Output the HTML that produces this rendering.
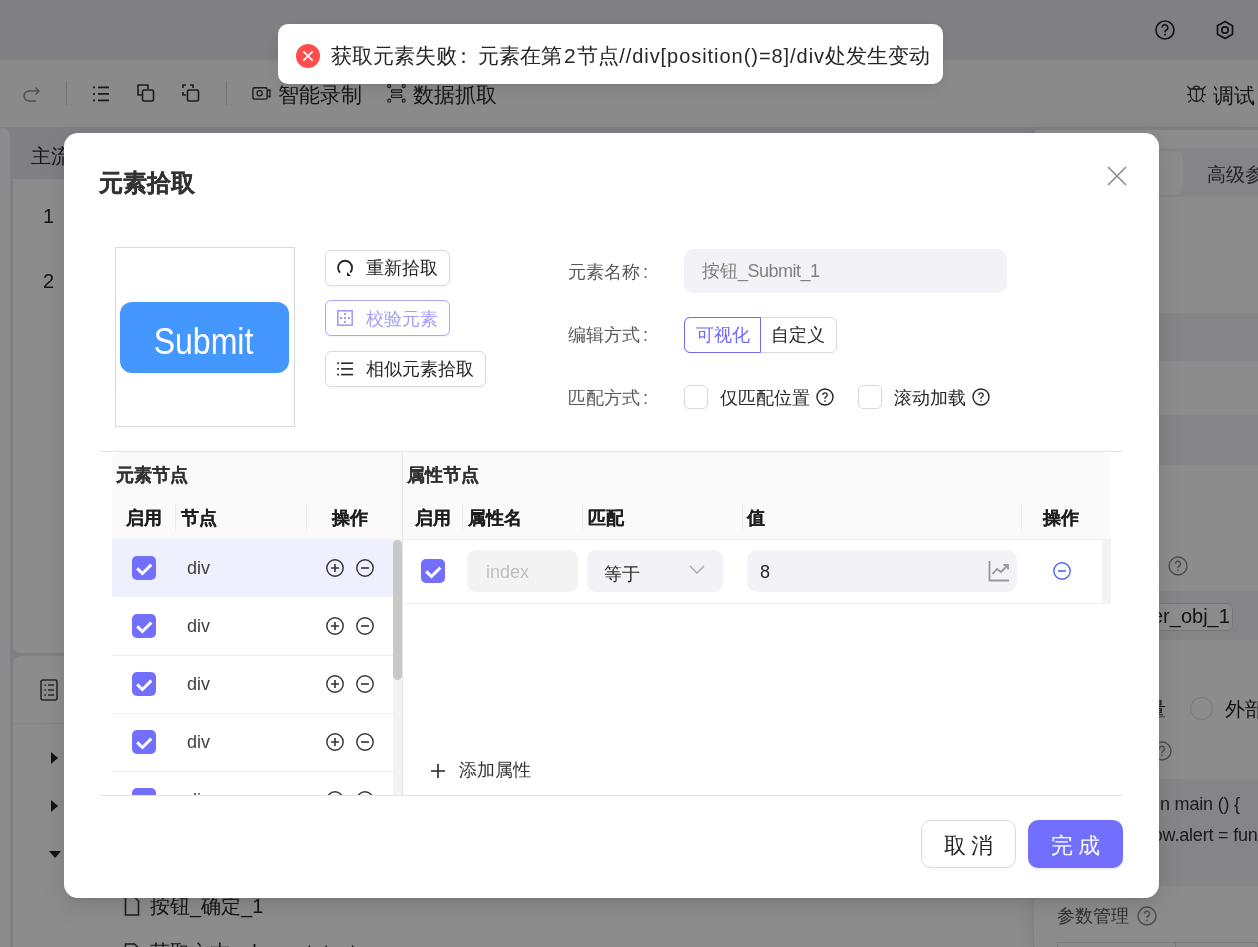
<!DOCTYPE html>
<html><head><meta charset="utf-8">
<style>
*{box-sizing:border-box;margin:0;padding:0}
html,body{width:1258px;height:947px;overflow:hidden;font-family:"Liberation Sans",sans-serif;background:#e9e7f1;position:relative;color:#262626}
.a{position:absolute}
.t{position:absolute;white-space:nowrap;line-height:1}
svg{position:absolute;overflow:visible}
/* background app */
#topbar{left:0;top:0;width:1258px;height:60px;background:#e9e7f1}
#toolbar{left:0;top:60px;width:1258px;height:67px;background:#fbfbfb}
#mask{left:0;top:0;width:1258px;height:947px;background:rgba(0,0,0,0.45)}
.sep{position:absolute;width:1px;height:24px;top:81px;background:#d0d0d0}
.bgtxt{font-size:22px;color:#262626}
/* modal */
#modal{left:64px;top:133px;width:1095px;height:765px;background:#fff;border-radius:14px;box-shadow:0 6px 16px rgba(0,0,0,.08),0 3px 6px -4px rgba(0,0,0,.12),0 9px 28px 8px rgba(0,0,0,.05)}
#toast{left:278px;top:24px;width:665px;height:60px;background:#fff;border-radius:10px;box-shadow:0 6px 16px rgba(0,0,0,.08),0 3px 6px -4px rgba(0,0,0,.12)}
.btn{position:absolute;height:36px;border:1px solid #d9d9d9;border-radius:6px;background:#fff;box-shadow:0 2px 0 rgba(0,0,0,.02);font-size:18px;line-height:34px;color:#262626}
.lbl{position:absolute;font-size:18px;color:#595959;line-height:20px;white-space:nowrap}
.cb{position:absolute;width:24px;height:24px;border:1px solid #d9d9d9;border-radius:5px;background:#fff}
.cbc{position:absolute;width:24px;height:24px;border-radius:5px;background:#736ffe}
.hd{position:absolute;font-size:18px;font-weight:bold;color:#1f1f1f;line-height:20px;white-space:nowrap;-webkit-text-stroke:.15px #1f1f1f}
.vd{position:absolute;width:1px;height:28px;top:503px;background:#ececec}
.hl{position:absolute;height:1px;background:#efefef}
.cell{position:absolute;font-size:18px;color:#404040;line-height:20px;white-space:nowrap}
#wrap{position:absolute;left:0;top:0;width:1258px;height:947px;will-change:transform}
</style></head><body><div id="wrap">
<!-- ===== background app ===== -->
<div id="topbar" class="a"></div>
<svg style="left:1155px;top:20px" width="20" height="20" viewBox="0 0 20 20"><circle cx="10" cy="10" r="9" fill="none" stroke="#222" stroke-width="1.6"/><path d="M7.2 7.6a2.8 2.8 0 1 1 3.8 2.6c-.7.3-1 .8-1 1.5v.6" fill="none" stroke="#222" stroke-width="1.6"/><circle cx="10" cy="14.6" r="1" fill="#222"/></svg>
<svg style="left:1215px;top:20px" width="20" height="20" viewBox="0 0 20 20"><path d="M10 1.5 17.5 5.8v8.4L10 18.5 2.5 14.2V5.8z" fill="none" stroke="#222" stroke-width="1.7" stroke-linejoin="round"/><circle cx="10" cy="10" r="3.2" fill="none" stroke="#222" stroke-width="1.7"/></svg>
<div id="toolbar" class="a"></div>
<!-- toolbar icons -->
<svg style="left:22px;top:84px" width="20" height="20" viewBox="0 0 20 20"><path d="M17 7H7a5 5 0 0 0 0 10h7" fill="none" stroke="#8f8f8f" stroke-width="1.4"/><path d="M13.5 3.5 17 7l-3.5 3.5" fill="none" stroke="#8f8f8f" stroke-width="1.4"/></svg>
<div class="sep" style="left:66px"></div>
<svg style="left:91px;top:84px" width="20" height="20" viewBox="0 0 20 20" fill="#333"><rect x="2" y="2.5" width="2" height="1.8"/><rect x="7" y="2.5" width="11" height="1.8"/><rect x="2" y="9" width="2" height="1.8"/><rect x="7" y="9" width="11" height="1.8"/><rect x="2" y="15.5" width="2" height="1.8"/><rect x="7" y="15.5" width="11" height="1.8"/></svg>
<svg style="left:136px;top:83px" width="20" height="20" viewBox="0 0 20 20"><path d="M12 6V2H2v10h4" fill="none" stroke="#333" stroke-width="1.6" stroke-linejoin="round"/><rect x="6.5" y="7" width="11" height="11" rx="1.5" fill="none" stroke="#333" stroke-width="1.6"/></svg>
<svg style="left:181px;top:83px" width="20" height="20" viewBox="0 0 20 20"><path d="M2 5V2h3M9 2h3v3M2 9v3h3" fill="none" stroke="#333" stroke-width="1.6"/><rect x="6.5" y="7" width="11" height="11" rx="1.5" fill="none" stroke="#333" stroke-width="1.6"/></svg>
<div class="sep" style="left:226px"></div>
<svg style="left:246px;top:80px" width="32" height="28" viewBox="0 0 32 28"><rect x="6.9" y="7.8" width="14.3" height="11.3" rx="1.6" fill="none" stroke="#333" stroke-width="1.4"/><circle cx="13.6" cy="13.3" r="2.6" fill="none" stroke="#333" stroke-width="1.3"/><path d="M21.2 11.2 24 9.6V17.1l-2.8-1.6" fill="none" stroke="#333" stroke-width="1.3" stroke-linejoin="round"/></svg>
<div class="t bgtxt" style="left:278px;top:84px;font-size:21px">智能录制</div>
<svg style="left:380px;top:80px" width="32" height="28" viewBox="0 0 32 28" fill="none" stroke="#333" stroke-width="1.2"><circle cx="9.2" cy="6.2" r="1.5"/><circle cx="23.7" cy="6.2" r="1.5"/><circle cx="9.2" cy="20.7" r="1.5"/><circle cx="23.7" cy="20.7" r="1.5"/><rect x="11.5" y="9.8" width="10.2" height="2.5" rx=".6"/><rect x="11.5" y="15" width="10.2" height="2.5" rx=".6"/></svg>
<div class="t bgtxt" style="left:413px;top:84px;font-size:21px">数据抓取</div>
<svg style="left:1180px;top:78px" width="32" height="32" viewBox="0 0 32 32" fill="none" stroke="#333" stroke-width="1.3"><path d="M10.3 11H22.6V16C22.6 20.5 19.6 23.3 16.45 23.3S10.3 20.5 10.3 16Z"/><path d="M13.1 11A3.4 3.4 0 0 1 19.8 11M16.45 11V23.3M7.3 8.3 10.2 10.9M25.7 8.3 22.7 10.9M7.3 16.6H10.2M22.7 16.6H25.8M8.4 24.3 11.1 22M24.3 24.3 21.6 22"/></svg>
<div class="t bgtxt" style="left:1213px;top:85px;font-size:21px">调试</div>

<!-- left panels -->
<div class="a" style="left:0;top:128px;width:10px;height:819px;background:#fff;border-radius:0 8px 0 0"></div>
<div class="a" style="left:13px;top:128px;width:1020px;height:525px;background:#fff;border-radius:8px 0 0 8px;overflow:hidden">
  <div class="a" style="left:0;top:0;width:1020px;height:51px;background:#e9e7f1"></div>
</div>
<div class="t" style="left:31px;top:146px;font-size:20px;color:#262626">主流程</div>
<div class="t" style="left:43px;top:206px;font-size:20px;color:#262626">1</div>
<div class="t" style="left:43px;top:271px;font-size:20px;color:#262626">2</div>
<div class="a" style="left:13px;top:656px;width:1020px;height:300px;background:#fff;border-radius:8px 0 0 0">
  <div class="a" style="left:0;top:67px;width:1020px;height:1px;background:#ebebeb"></div>
</div>
<svg style="left:40px;top:679px" width="18" height="22" viewBox="0 0 18 22"><rect x="1" y="1" width="16" height="20" rx="2" fill="none" stroke="#4a4a4a" stroke-width="1.6"/><path d="M4.5 6h1.5M8 6h6M4.5 11h1.5M8 11h6M4.5 16h1.5M8 16h6" stroke="#4a4a4a" stroke-width="1.6"/></svg>
<svg style="left:50px;top:752px" width="10" height="12" viewBox="0 0 10 12"><path d="M1 0l7 6-7 6z" fill="#222"/></svg>
<svg style="left:50px;top:800px" width="10" height="12" viewBox="0 0 10 12"><path d="M1 0l7 6-7 6z" fill="#222"/></svg>
<svg style="left:49px;top:850px" width="12" height="10" viewBox="0 0 12 10"><path d="M0 1h12l-6 7z" fill="#222"/></svg>
<svg style="left:124px;top:896px" width="16" height="20" viewBox="0 0 16 20"><path d="M1.5 1h9l4 4v14h-13z" fill="none" stroke="#333" stroke-width="1.6"/></svg>
<div class="t" style="left:150px;top:896px;font-size:20px;color:#262626">按钮_确定_1</div>
<svg style="left:124px;top:943px" width="16" height="20" viewBox="0 0 16 20"><path d="M1.5 1h9l4 4v14h-13z" fill="none" stroke="#333" stroke-width="1.6"/></svg>
<div class="t" style="left:150px;top:942px;font-size:20px;color:#262626">获取文本_element_text</div>

<!-- right panel -->
<div class="a" style="left:1033px;top:128px;width:225px;height:819px;background:#fff;border-radius:8px 0 0 0;border-left:1px solid #ececec;box-shadow:-6px 0 14px rgba(0,0,0,.06)">
  <div class="a" style="left:0;top:0;width:225px;height:2px;background:#e9e7f1"></div>
  <div class="a" style="left:0;top:20px;width:225px;height:49px;background:#f2f1f5"></div>
  <div class="a" style="left:10px;top:23px;width:139px;height:44px;background:#fff;border-radius:8px"></div>
  <div class="a" style="left:0;top:185px;width:225px;height:48px;background:#f2f1f5"></div>
  <div class="a" style="left:0;top:287px;width:225px;height:50px;background:#f2f1f5"></div>
  <div class="a" style="left:0;top:463px;width:225px;height:49px;background:#f2f1f5"></div>
  <div class="a" style="left:0;top:651px;width:225px;height:107px;background:#f2f1f5"></div>
</div>
<div class="t" style="left:1207px;top:165px;font-size:19px;color:#404040">高级参数</div>
<div class="t" style="left:1120px;top:556px;font-size:20px;color:#595959">元素</div>
<svg style="left:1168px;top:556px" width="20" height="20" viewBox="0 0 20 20"><circle cx="10" cy="10" r="9" fill="none" stroke="#8c8c8c" stroke-width="1.4"/><path d="M7.5 7.8a2.5 2.5 0 1 1 3.4 2.3c-.6.3-.9.7-.9 1.3v.6" fill="none" stroke="#8c8c8c" stroke-width="1.4"/><circle cx="10" cy="14.3" r=".9" fill="#8c8c8c"/></svg>
<div class="a" style="left:1100px;top:603px;width:133px;height:28px;border:1px solid #d9d9d9;border-radius:6px;background:#fff"></div>
<div class="t" style="left:1152px;top:606px;font-size:20px;color:#262626">er_obj_1</div>
<div class="t" style="left:1126px;top:699px;font-size:20px;color:#262626">变量</div>
<div class="a" style="left:1190px;top:697px;width:23px;height:23px;border:1px solid #d9d9d9;border-radius:50%;background:#fff"></div>
<div class="t" style="left:1225px;top:699px;font-size:20px;color:#262626">外部</div>
<svg style="left:1152px;top:741px" width="20" height="20" viewBox="0 0 20 20"><circle cx="10" cy="10" r="9" fill="none" stroke="#8c8c8c" stroke-width="1.4"/><path d="M7.5 7.8a2.5 2.5 0 1 1 3.4 2.3c-.6.3-.9.7-.9 1.3v.6" fill="none" stroke="#8c8c8c" stroke-width="1.4"/><circle cx="10" cy="14.3" r=".9" fill="#8c8c8c"/></svg>
<div class="t" style="left:1160px;top:795px;font-size:18px;letter-spacing:-.2px;color:#333">n main () {</div>
<div class="t" style="left:1143px;top:826px;font-size:18px;letter-spacing:-.2px;color:#333">dow.alert = function</div>
<div class="t" style="left:1057px;top:907px;font-size:18px;color:#595959">参数管理</div>
<svg style="left:1137px;top:906px" width="20" height="20" viewBox="0 0 20 20"><circle cx="10" cy="10" r="9" fill="none" stroke="#8c8c8c" stroke-width="1.4"/><path d="M7.5 7.8a2.5 2.5 0 1 1 3.4 2.3c-.6.3-.9.7-.9 1.3v.6" fill="none" stroke="#8c8c8c" stroke-width="1.4"/><circle cx="10" cy="14.3" r=".9" fill="#8c8c8c"/></svg>
<div class="a" style="left:1057px;top:942px;width:201px;height:10px;border:1px solid #e0e0e0"></div>
<div class="a" style="left:1175px;top:942px;width:1px;height:10px;background:#e0e0e0"></div>

<div id="mask" class="a"></div>

<!-- ===== modal ===== -->
<div id="modal" class="a"></div>
<div class="t" style="left:99px;top:171px;font-size:24px;font-weight:bold;color:#333;-webkit-text-stroke:.3px #333">元素拾取</div>
<svg style="left:1107px;top:166px" width="20" height="20" viewBox="0 0 20 20"><path d="M1 1l18 18M19 1 1 19" stroke="#8c8c8c" stroke-width="1.7"/></svg>

<!-- preview -->
<div class="a" style="left:115px;top:247px;width:180px;height:180px;border:1px solid #d9d9d9"></div>
<div class="a" style="left:120px;top:302px;width:169px;height:71px;background:#4397ff;border-radius:12px"></div>
<div class="t" style="left:119px;top:324px;width:169px;text-align:center;font-size:36px;color:#fff;transform:scaleX(.89)">Submit</div>

<!-- action buttons -->
<div class="btn" style="left:325px;top:250px;width:125px"></div>
<svg style="left:337px;top:260px" width="16" height="16" viewBox="0 0 16 16"><path d="M3.05 12.65A7 7 0 1 1 13.1 12.6" fill="none" stroke="#262626" stroke-width="1.8"/><path d="M10 12v3.9h4z" fill="#262626"/></svg>
<div class="t" style="left:366px;top:259px;font-size:18px;color:#262626">重新拾取</div>
<div class="btn" style="left:325px;top:300px;width:125px;border-color:#aba6fc"></div>
<svg style="left:337px;top:310px" width="16" height="16" viewBox="0 0 16 16" fill="#a29dfa"><rect x=".8" y=".8" width="14.4" height="14.4" fill="none" stroke="#a29dfa" stroke-width="1.6"/><rect x="7" y="3" width="2" height="2"/><rect x="3" y="7" width="2" height="2"/><rect x="7" y="7" width="2" height="2"/><rect x="11" y="7" width="2" height="2"/><rect x="7" y="11" width="2" height="2"/></svg>
<div class="t" style="left:366px;top:310px;font-size:18px;color:#a29dfa">校验元素</div>
<div class="btn" style="left:325px;top:351px;width:161px"></div>
<svg style="left:337px;top:355px" width="17" height="24" viewBox="0 0 17 24" fill="#262626"><rect x="0.2" y="7.3" width="1.7" height="1.8"/><rect x="4.1" y="7.4" width="11.9" height="1.6"/><rect x="0.2" y="13" width="1.7" height="1.8"/><rect x="4.1" y="13.1" width="11.9" height="1.6"/><rect x="0.2" y="18.7" width="1.7" height="1.8"/><rect x="4.1" y="18.8" width="11.9" height="1.6"/></svg>
<div class="t" style="left:366px;top:360px;font-size:18px;color:#262626">相似元素拾取</div>

<!-- form -->
<div class="lbl" style="left:568px;top:262px">元素名称<span style="margin-left:3px">:</span></div>
<div class="a" style="left:684px;top:249px;width:323px;height:44px;background:#f2f2f7;border-radius:10px"></div>
<div class="t" style="left:702px;top:262px;font-size:18px;color:#808080">按钮<span style="letter-spacing:-.5px">_Submit_1</span></div>
<div class="lbl" style="left:568px;top:325px">编辑方式<span style="margin-left:3px">:</span></div>
<div class="a" style="left:684px;top:317px;width:153px;height:36px;border:1px solid #d9d9d9;border-radius:6px"></div>
<div class="a" style="left:684px;top:317px;width:77px;height:36px;border:1px solid #6f6af8;border-radius:6px 0 0 6px"></div>
<div class="t" style="left:696px;top:326px;font-size:18px;color:#6f6af8">可视化</div>
<div class="t" style="left:771px;top:326px;font-size:18px;color:#262626">自定义</div>
<div class="lbl" style="left:568px;top:388px">匹配方式<span style="margin-left:3px">:</span></div>
<div class="cb" style="left:684px;top:385px"></div>
<div class="t" style="left:720px;top:389px;font-size:18px;color:#262626">仅匹配位置</div>
<svg style="left:816px;top:388px" width="18" height="18" viewBox="0 0 18 18"><circle cx="9" cy="9" r="8" fill="none" stroke="#262626" stroke-width="1.4"/><path d="M6.8 7a2.2 2.2 0 1 1 3 2.1c-.5.2-.8.6-.8 1.1v.6" fill="none" stroke="#262626" stroke-width="1.4"/><circle cx="9" cy="13" r=".85" fill="#262626"/></svg>
<div class="cb" style="left:858px;top:385px"></div>
<div class="t" style="left:894px;top:389px;font-size:18px;color:#262626">滚动加载</div>
<svg style="left:972px;top:388px" width="18" height="18" viewBox="0 0 18 18"><circle cx="9" cy="9" r="8" fill="none" stroke="#262626" stroke-width="1.4"/><path d="M6.8 7a2.2 2.2 0 1 1 3 2.1c-.5.2-.8.6-.8 1.1v.6" fill="none" stroke="#262626" stroke-width="1.4"/><circle cx="9" cy="13" r=".85" fill="#262626"/></svg>

<!-- tables -->
<div class="hl" style="left:100px;top:451px;width:1023px;background:#e5e5e5"></div>
<div class="a" style="left:112px;top:452px;width:290px;height:343px;overflow:hidden;border-radius:8px 0 0 0">
  <div class="a" style="left:0;top:0;width:290px;height:87px;background:#fafafa"></div>
  <div class="a" style="left:0;top:87px;width:281px;height:58px;background:#eef0fd"></div>
  <div class="a" style="left:281px;top:87px;width:9px;height:260px;background:#f3f3f3"></div>
  <div class="a" style="left:281px;top:88px;width:9px;height:140px;background:#c8c8c8;border-radius:4.5px"></div>
</div>
<div class="hd" style="left:116px;top:465px;color:#333;-webkit-text-stroke-color:#333">元素节点</div>
<div class="hd" style="left:126px;top:508px">启用</div>
<div class="vd" style="left:175px"></div>
<div class="hd" style="left:181px;top:508px">节点</div>
<div class="vd" style="left:306px"></div>
<div class="hd" style="left:332px;top:508px">操作</div>
<div class="hl" style="left:112px;top:539px;width:281px"></div>
<div class="hl" style="left:112px;top:655px;width:281px"></div>
<div class="hl" style="left:112px;top:713px;width:281px"></div>
<div class="hl" style="left:112px;top:771px;width:281px"></div>

<div class="a" style="left:112px;top:539px;width:281px;height:256px;overflow:hidden"><div class="a" style="left:-112px;top:-539px;width:1258px;height:947px">
<div class="cbc" style="left:132px;top:556px"><svg style="left:0;top:0" width="24" height="24" viewBox="0 0 24 24"><path d="M5.2 12.4l5.2 5.1 8.9-8.9" fill="none" stroke="#fff" stroke-width="3"/></svg></div>
<div class="cell" style="left:187px;top:558px">div</div>
<svg style="left:326px;top:559px" width="18" height="18" viewBox="0 0 18 18"><circle cx="9" cy="9" r="8.2" fill="none" stroke="#333" stroke-width="1.4"/><path d="M5 9h8M9 5v8" stroke="#333" stroke-width="1.6"/></svg>
<svg style="left:356px;top:559px" width="18" height="18" viewBox="0 0 18 18"><circle cx="9" cy="9" r="8.2" fill="none" stroke="#333" stroke-width="1.4"/><path d="M5 9h8" stroke="#333" stroke-width="1.6"/></svg>
<div class="cbc" style="left:132px;top:614px"><svg style="left:0;top:0" width="24" height="24" viewBox="0 0 24 24"><path d="M5.2 12.4l5.2 5.1 8.9-8.9" fill="none" stroke="#fff" stroke-width="3"/></svg></div>
<div class="cell" style="left:187px;top:616px">div</div>
<svg style="left:326px;top:617px" width="18" height="18" viewBox="0 0 18 18"><circle cx="9" cy="9" r="8.2" fill="none" stroke="#333" stroke-width="1.4"/><path d="M5 9h8M9 5v8" stroke="#333" stroke-width="1.6"/></svg>
<svg style="left:356px;top:617px" width="18" height="18" viewBox="0 0 18 18"><circle cx="9" cy="9" r="8.2" fill="none" stroke="#333" stroke-width="1.4"/><path d="M5 9h8" stroke="#333" stroke-width="1.6"/></svg>
<div class="cbc" style="left:132px;top:672px"><svg style="left:0;top:0" width="24" height="24" viewBox="0 0 24 24"><path d="M5.2 12.4l5.2 5.1 8.9-8.9" fill="none" stroke="#fff" stroke-width="3"/></svg></div>
<div class="cell" style="left:187px;top:674px">div</div>
<svg style="left:326px;top:675px" width="18" height="18" viewBox="0 0 18 18"><circle cx="9" cy="9" r="8.2" fill="none" stroke="#333" stroke-width="1.4"/><path d="M5 9h8M9 5v8" stroke="#333" stroke-width="1.6"/></svg>
<svg style="left:356px;top:675px" width="18" height="18" viewBox="0 0 18 18"><circle cx="9" cy="9" r="8.2" fill="none" stroke="#333" stroke-width="1.4"/><path d="M5 9h8" stroke="#333" stroke-width="1.6"/></svg>
<div class="cbc" style="left:132px;top:730px"><svg style="left:0;top:0" width="24" height="24" viewBox="0 0 24 24"><path d="M5.2 12.4l5.2 5.1 8.9-8.9" fill="none" stroke="#fff" stroke-width="3"/></svg></div>
<div class="cell" style="left:187px;top:732px">div</div>
<svg style="left:326px;top:733px" width="18" height="18" viewBox="0 0 18 18"><circle cx="9" cy="9" r="8.2" fill="none" stroke="#333" stroke-width="1.4"/><path d="M5 9h8M9 5v8" stroke="#333" stroke-width="1.6"/></svg>
<svg style="left:356px;top:733px" width="18" height="18" viewBox="0 0 18 18"><circle cx="9" cy="9" r="8.2" fill="none" stroke="#333" stroke-width="1.4"/><path d="M5 9h8" stroke="#333" stroke-width="1.6"/></svg>
<div class="cbc" style="left:132px;top:788px"><svg style="left:0;top:0" width="24" height="24" viewBox="0 0 24 24"><path d="M5.2 12.4l5.2 5.1 8.9-8.9" fill="none" stroke="#fff" stroke-width="3"/></svg></div>
<div class="cell" style="left:187px;top:790px">div</div>
<svg style="left:326px;top:791px" width="18" height="18" viewBox="0 0 18 18"><circle cx="9" cy="9" r="8.2" fill="none" stroke="#333" stroke-width="1.4"/><path d="M5 9h8M9 5v8" stroke="#333" stroke-width="1.6"/></svg>
<svg style="left:356px;top:791px" width="18" height="18" viewBox="0 0 18 18"><circle cx="9" cy="9" r="8.2" fill="none" stroke="#333" stroke-width="1.4"/><path d="M5 9h8" stroke="#333" stroke-width="1.6"/></svg>
</div></div>
<div class="cbc" style="left:421px;top:559px"><svg style="left:0;top:0" width="24" height="24" viewBox="0 0 24 24"><path d="M5.2 12.4l5.2 5.1 8.9-8.9" fill="none" stroke="#fff" stroke-width="3"/></svg></div>
<div class="a" style="left:402px;top:452px;width:1px;height:343px;background:#e5e5e5"></div>
<div class="a" style="left:403px;top:452px;width:708px;height:152px;overflow:hidden;border-radius:8px 8px 0 0">
  <div class="a" style="left:0;top:0;width:708px;height:87px;background:#fafafa"></div>
  <div class="a" style="left:699px;top:87px;width:9px;height:65px;background:#f3f3f3"></div>
</div>
<div class="hd" style="left:407px;top:465px;color:#333;-webkit-text-stroke-color:#333">属性节点</div>
<div class="hd" style="left:415px;top:508px">启用</div>
<div class="vd" style="left:462px"></div>
<div class="hd" style="left:468px;top:508px">属性名</div>
<div class="vd" style="left:582px"></div>
<div class="hd" style="left:588px;top:508px">匹配</div>
<div class="vd" style="left:742px"></div>
<div class="hd" style="left:747px;top:508px">值</div>
<div class="vd" style="left:1021px"></div>
<div class="hd" style="left:1043px;top:508px">操作</div>
<div class="hl" style="left:403px;top:539px;width:699px"></div>
<div class="hl" style="left:403px;top:603px;width:699px"></div>

<div class="a" style="left:467px;top:550px;width:111px;height:42px;background:#f3f3f3;border-radius:9px"></div>
<div class="t" style="left:486px;top:563px;font-size:18px;color:#bfbfbf">index</div>
<div class="a" style="left:587px;top:550px;width:136px;height:42px;background:#f2f2f7;border-radius:9px"></div>
<div class="t" style="left:604px;top:565px;font-size:18px;color:#262626">等于</div>
<svg style="left:689px;top:565px" width="16" height="10" viewBox="0 0 16 10"><path d="M1 1l7 7 7-7" fill="none" stroke="#a6a6a6" stroke-width="1.4"/></svg>
<div class="a" style="left:747px;top:550px;width:270px;height:42px;background:#f2f2f7;border-radius:10px"></div>
<div class="t" style="left:760px;top:563px;font-size:18px;color:#262626">8</div>
<svg style="left:988px;top:560px" width="22" height="22" viewBox="0 0 22 22"><path d="M1.5 1v19.5H21" fill="none" stroke="#999" stroke-width="1.8"/><path d="M4.5 14l4.5-5 4 3 6-6" fill="none" stroke="#999" stroke-width="1.8"/><path d="M15.5 5h4.5v4.5" fill="none" stroke="#999" stroke-width="1.8"/></svg>
<svg style="left:1053px;top:562px" width="18" height="18" viewBox="0 0 18 18"><circle cx="9" cy="9" r="8.2" fill="none" stroke="#4d63f7" stroke-width="1.4"/><path d="M5 9h8" stroke="#4d63f7" stroke-width="1.6"/></svg>

<div class="hl" style="left:100px;top:795px;width:1023px;background:#e5e5e5"></div>
<svg style="left:430px;top:763px" width="16" height="16" viewBox="0 0 16 16"><path d="M8 1v14M1 8h14" stroke="#262626" stroke-width="1.6"/></svg>
<div class="t" style="left:459px;top:761px;font-size:18px;color:#333">添加属性</div>

<!-- footer -->
<div class="a" style="left:921px;top:820px;width:95px;height:48px;border:1px solid #d9d9d9;border-radius:10px;box-shadow:0 2px 0 rgba(0,0,0,.02)"></div>
<div class="t" style="left:921px;top:835px;width:95px;text-align:center;font-size:22px;letter-spacing:5px;text-indent:5px;color:#262626">取消</div>
<div class="a" style="left:1028px;top:820px;width:95px;height:48px;background:#736ffe;border-radius:10px;box-shadow:0 2px 0 rgba(115,111,254,.1)"></div>
<div class="t" style="left:1028px;top:835px;width:95px;text-align:center;font-size:22px;letter-spacing:5px;text-indent:5px;color:#fff">完成</div>

<!-- ===== toast ===== -->
<div id="toast" class="a"></div>
<svg style="left:296px;top:44px" width="24" height="24" viewBox="0 0 24 24"><circle cx="12" cy="12" r="12" fill="#ff4d4f"/><path d="M7.3 7.3l9.4 9.4M16.7 7.3l-9.4 9.4" stroke="#fff" stroke-width="1.7"/></svg>
<div class="t" style="left:331px;top:45px;font-size:21px;color:#262626">获取元素失败<span style="margin-left:-4px;margin-right:4px">：</span>元素在第<span style="margin:0 1.5px 0 2px">2</span>节点<span style="font-size:20px;letter-spacing:.95px">//div[position()=8]/div</span>处发生变动</div>
</div></body></html>
